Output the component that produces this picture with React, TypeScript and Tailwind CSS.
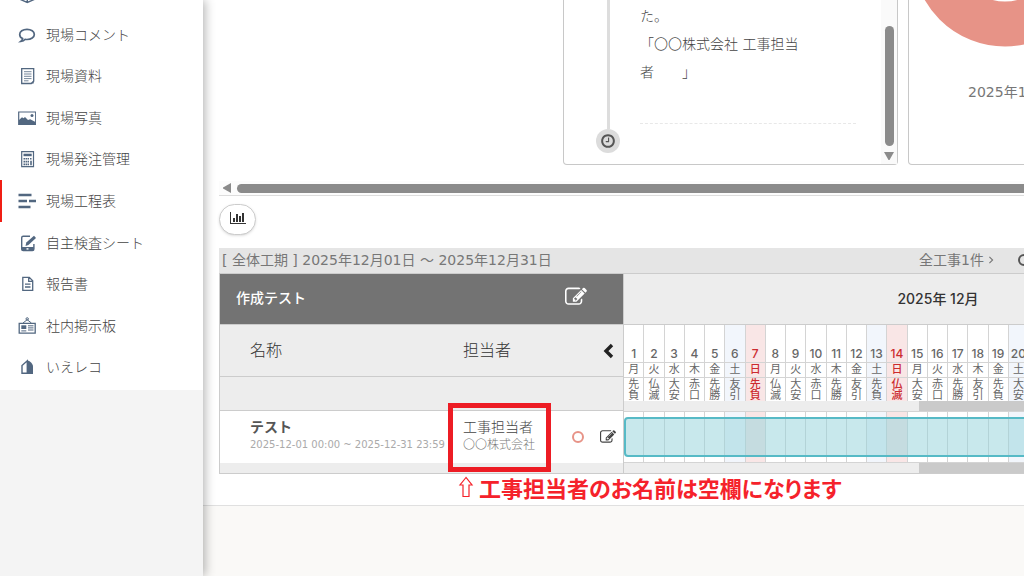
import type { ReactNode } from "react";

const EDIT_PATH =
  "M888 1184l116-116-152-152-116 116v56h96v96h56zm440-720q-16-16-33 1l-350 350q-17 17-1 33t33-1l350-350q17-17 1-33zm80 594v190q0 119-84.5 203.5t-203.5 84.5h-832q-119 0-203.5-84.5t-84.5-203.5v-832q0-119 84.5-203.5t203.5-84.5h832q63 0 117 25 15 7 18 23 3 17-9 29l-49 49q-14 14-32 8-23-6-45-6h-832q-66 0-113 47t-47 113v832q0 66 47 113t113 47h832q66 0 113-47t47-113v-126q0-13 9-22l64-64q15-15 35-7t20 29zm-96-738l288 288-672 672h-288v-288zm444 132l-92 92-288-288 92-92q28-28 68-28t68 28l152 152q28 28 28 68t-28 68z";

const CLOCK_PATH =
  "M1024 544v448q0 14-9 23t-23 9h-320q-14 0-23-9t-9-23v-64q0-14 9-23t23-9h224v-352q0-14 9-23t23-9h64q14 0 23 9t9 23zm416 352q0-148-73-273t-198-198-273-73-273 73-198 198-73 273 73 273 198 198 273 73 273-73 198-198 73-273zm224 0q0 209-103 385.5t-279.5 279.5-385.5 103-385.5-103-279.5-279.5-103-385.5 103-385.5 279.5-279.5 385.5-103 385.5 103 279.5 279.5 103 385.5z";

const CHART_PATH =
  "M640 896v512h-256v-512h256zm384-512v1024h-256v-1024h256zm1024 1152v128h-2048v-1536h128v1408h1920zm-640-896v768h-256v-768h256zm384-384v1152h-256v-1152h256z";

function EditIcon({ className }: { className: string }) {
  return (
    <svg viewBox="0 0 1792 1792" fill="currentColor" className={className} aria-hidden="true">
      <path d={EDIT_PATH} />
    </svg>
  );
}

// Sidebar icons share an 18x18 box
function Icon({ children }: { children: ReactNode }) {
  return (
    <svg
      viewBox="0 0 18 18"
      className="size-[18px] shrink-0 text-[#526780]"
      fill="none"
      stroke="currentColor"
      strokeWidth="1.4"
      aria-hidden="true"
    >
      {children}
    </svg>
  );
}

interface MenuItem {
  label: string;
  active?: boolean;
  icon: ReactNode;
}

const MENU: MenuItem[] = [
  {
    label: "現場コメント",
    icon: (
      <path
        d="M9 3.300C4.800 3.300 1.700 5.500 1.700 8.400c0 1.800 1.100 3.300 2.900 4.200-.2 1.100-.8 2-1.800 2.800 2-.2 3.400-.9 4.400-2.100.6.1 1.200.2 1.800.2 4.200 0 7.300-2.200 7.300-5.100S13.200 3.300 9 3.300z"
        strokeWidth="1.700"
      />
    ),
  },
  {
    label: "現場資料",
    icon: (
      <>
        <path d="M3.700 1.700h12v12.500l-2.400 2.300H3.700z" strokeWidth="1.300" />
        <path d="M6 4.700h7.500M6 7h7.500M6 9.300h7.500M6 11.600h7.500M6 13.800h4.500" strokeWidth=".8" />
        <path d="M15.700 13.500v3h-3z" fill="currentColor" stroke="none" />
      </>
    ),
  },
  {
    label: "現場写真",
    icon: (
      <>
        <path d="M.7 3h17v12.300H.7z" strokeWidth="1.200" />
        <path d="M1 15V11l3-2.800 1.500 1L7 8l3 3 2.200-.8L17.500 13v2z" fill="currentColor" stroke="none" />
        <circle cx="14" cy="6.500" r="1.500" fill="currentColor" stroke="none" />
      </>
    ),
  },
  {
    label: "現場発注管理",
    icon: (
      <>
        <path d="M3.700 1.600h11.800v15H3.700z" strokeWidth="1.200" />
        <path d="M5.500 3.700h8.200v2.500H5.500z" fill="currentColor" stroke="none" />
        <path d="M5.500 8.700h5.500M5.500 11.600h5.500M5.500 14.400h5.500M12 8.700h2" strokeWidth="1.600" strokeDasharray="1.500 .5" />
        <path d="M13 10.800v4.400" strokeWidth="1.600" />
      </>
    ),
  },
  {
    label: "現場工程表",
    active: true,
    icon: <path d="M.5 3h13M.5 9h8.500M11 9h7M.5 15h12" strokeWidth="2.400" />,
  },
  {
    label: "自主検査シート",
    icon: (
      <>
        <path d="M12 2.200H5.200Q3.700 2.200 3.700 3.700v11.400q0 1.500 1.500 1.500h9.200q1.500 0 1.500-1.500V10" />
        <path d="M3.700 13h12.200v3.200H3.700z" fill="currentColor" stroke="none" />
        <path d="M8.500 14.900h2" stroke="#fff" />
        <path d="M7.500 12l.8-3.500 7.700-6.800 2 2.200-7.600 7.200z" fill="currentColor" stroke="none" />
      </>
    ),
  },
  {
    label: "報告書",
    icon: (
      <>
        <path d="M4.800 2.300h6.500l3.400 3.400v9.600H4.800zM10.700 2.500v3.800h3.800" strokeWidth="1.300" />
        <path d="M7 9.200h5.500M7 12h5.500" strokeWidth="1.300" />
      </>
    ),
  },
  {
    label: "社内掲示板",
    icon: (
      <>
        <path d="M1.200 6.300h16v9.900h-16z" strokeWidth="1.300" />
        <path d="M5 6l4.200-3.300L13.400 6" strokeWidth="1" />
        <circle cx="9.200" cy="1.900" r="1.200" strokeWidth="1" />
        <path d="M3.300 8.300h5v3.700h-5z" fill="currentColor" stroke="none" />
        <path d="M10 8.800h5.500M10 10.900h5.500M10 13h5.500M3.300 13.900h5" strokeWidth="1" />
      </>
    ),
  },
  {
    label: "いえレコ",
    icon: (
      <>
        <path d="M4 15.200V7.500L9.300 2.800V15.200z" />
        <path d="M9.300 2.200C12.500 3.200 15 6 15 8.500v7.400H9.300z" fill="currentColor" stroke="none" />
      </>
    ),
  },
];

const WEEKDAYS = ["月", "火", "水", "木", "金", "土", "日"];
// The cycle restarts on the 20th with the new lunar month
const ROKUYO = ["先負", "仏滅", "大安", "赤口", "先勝", "友引"];

const DAYS = Array.from({ length: 31 }, (_, i) => ({
  day: i + 1,
  weekday: WEEKDAYS[i % 7],
  rokuyo: i < 19 ? ROKUYO[i % 6] : ROKUYO[(i - 17) % 6],
}));

function dayColor(weekday: string) {
  if (weekday === "日") return "bg-[#f9e6e6] text-[#cc2b2f] font-medium";
  if (weekday === "土") return "bg-[#f2f6fc] text-[#666] font-normal";
  return "bg-white text-[#666] font-normal";
}

function Sidebar() {
  return (
    <aside className="relative z-10 w-[203px] shrink-0 bg-[#f4f4f4] shadow-[2px_0_10px_rgba(0,0,0,0.3)]">
      <nav className="bg-white pb-0.5">
        <div className="h-3.5 overflow-hidden pl-[18px]">
          <svg viewBox="0 14 18 4" className="h-1 w-[18px] text-[#526780]" fill="none" stroke="currentColor" strokeWidth="1.4">
            <path d="M2.500 4v9.500l6.800 3 6.800-3V4M9.300 9v7.500" />
          </svg>
        </div>
        <ul className="grid h-[374px] grid-rows-9">
          {MENU.map((item) => (
            <li key={item.label} className="flex">
              <a
                href="#"
                className={`flex flex-1 items-center gap-2.5 border-l-2 pl-4 text-sm ${
                  item.active ? "border-[#f01e14]" : "border-transparent"
                }`}
              >
                <Icon>{item.icon}</Icon>
                <span>{item.label}</span>
              </a>
            </li>
          ))}
        </ul>
      </nav>
    </aside>
  );
}

function Cards() {
  return (
    <div className="flex h-[165px] gap-2.5 pl-[344px]">
      <section className="flex w-[335px] shrink-0 rounded-b border border-t-0 border-[#c8c8c8]">
        <div className="ml-8 flex w-6 flex-col items-center">
          <div className="h-[129px] w-[3px] bg-[#ddd]" />
          <div className="flex size-6 items-center justify-center rounded-full bg-[#dcdcdc]">
            <svg viewBox="0 0 1792 1792" className="size-4 text-[#555]" fill="currentColor" aria-hidden="true">
              <path d={CLOCK_PATH} />
            </svg>
          </div>
        </div>
        <div className="ml-5 h-[124px] w-[216px] border-b border-dashed border-[#e8e8e8] pt-0.5 text-sm leading-7">
          <p>た。</p>
          <p>
            「〇〇株式会社 工事担当
            <br />
            者　　」
          </p>
        </div>
        <div className="ml-auto flex w-4 flex-col items-center bg-[#fafafa] pt-[26px]">
          <div className="h-[120px] w-[9px] rounded-full bg-[#8b8b8b]" />
          <svg viewBox="0 0 10 8" className="mt-1.5 h-2 w-2.5 text-[#8b8b8b]" fill="currentColor">
            <path d="M0 0h10L5.500 8h-1z" />
          </svg>
        </div>
      </section>
      <section className="flex w-[195px] shrink-0 flex-col rounded-b border border-t-0 border-[#c8c8c8]">
        <svg viewBox="0 139 186 47" className="ml-[3px] h-[47px] w-[186px]" aria-hidden="true">
          <circle cx="93" cy="93" r="70" fill="none" stroke="#e79387" strokeWidth="45" />
        </svg>
        <p className="mt-[35px] pl-[59px] text-sm font-normal text-[#777]">2025年12月</p>
      </section>
    </div>
  );
}

function TaskTable() {
  return (
    <table className="w-[404px] shrink-0 table-fixed border-separate border-spacing-0 border-l border-[#ccc] text-left">
      <colgroup>
        <col className="w-[230px]" />
        <col className="w-[111px]" />
        <col />
      </colgroup>
      <thead>
        <tr className="h-[50px] bg-[#737373] text-white">
          <th colSpan={2} className="pb-0.5 pl-4 text-sm font-medium">
            作成テスト
          </th>
          <th className="pb-1">
            <button className="ml-1 block" aria-label="工程表を編集">
              <EditIcon className="size-[22px]" />
            </button>
          </th>
        </tr>
        <tr className="h-[53px] bg-[#ededed] text-base text-[#333]">
          <th className="border-y border-[#ccc] pl-[30px] font-light">名称</th>
          <th className="border-y border-[#ccc] pl-[13px] font-light">担当者</th>
          <th className="border-y border-[#ccc] pr-2">
            <button className="ml-auto block" aria-label="閉じる">
              <svg viewBox="0 0 14 16" className="h-4 w-3.5 text-[#222]" fill="none" stroke="currentColor" strokeWidth="3.400">
                <path d="M11 2L5 8l6 6" />
              </svg>
            </button>
          </th>
        </tr>
        <tr className="h-[34px] bg-[#ededed]">
          <td colSpan={3} className="border-b border-[#ccc]" />
        </tr>
      </thead>
      <tbody>
        <tr className="h-[51px] bg-white">
          <td className="pb-1 pl-[30px] whitespace-nowrap">
            <div className="text-sm leading-5 font-bold text-[#555]">テスト</div>
            <div className="text-[10px] leading-4 font-normal text-[#aaa]">2025-12-01 00:00 ~ 2025-12-31 23:59</div>
          </td>
          <td className="pb-1 pl-[13px]">
            <div className="text-sm leading-5">工事担当者</div>
            <div className="text-xs leading-4 text-[#777]">〇〇株式会社</div>
          </td>
          <td className="pr-[7px]">
            <div className="flex items-center justify-between pl-[11px]">
              <span className="size-3 rounded-full border-2 border-[#e79387]" />
              <button aria-label="工事を編集">
                <EditIcon className="size-4 text-[#444]" />
              </button>
            </div>
          </td>
        </tr>
        <tr className="h-[11px] bg-[#ededed]">
          <td colSpan={3} className="border-b border-[#ccc]" />
        </tr>
      </tbody>
    </table>
  );
}

function Scrollbar() {
  return (
    <div className="h-2.5 bg-[#ededed] pl-[295px]">
      <div className="h-full bg-[#cacaca]" />
    </div>
  );
}

function Calendar() {
  return (
    <div className="min-w-0 flex-1 overflow-hidden border-b border-l border-[#ccc]">
      <table className="w-[628px] table-fixed border-separate border-spacing-0 text-center">
        <thead>
          <tr className="h-[51px] bg-[#ededed]">
            <th colSpan={31} className="border-b border-[#ccc] font-[Inter,'Noto_Sans_CJK_JP',sans-serif] text-sm font-medium text-[#333]">
              2025年 12月
            </th>
          </tr>
          <tr className="h-[38px]">
            {DAYS.map((d) => (
              <th
                key={d.day}
                className={`border-r border-b border-[#d4d4d4] align-bottom font-[Inter,sans-serif] text-xs ${dayColor(d.weekday)}`}
              >
                <span className="font-medium">{d.day}</span>
              </th>
            ))}
          </tr>
          <tr className="h-[15px]">
            {DAYS.map((d) => (
              <td key={d.day} className={`border-r border-b border-[#d4d4d4] text-[11px] leading-[14px] ${dayColor(d.weekday)}`}>
                {d.weekday}
              </td>
            ))}
          </tr>
          <tr className="h-[23px]">
            {DAYS.map((d) => (
              <td key={d.day} className={`border-r border-[#d4d4d4] text-[11px] leading-[11px] ${dayColor(d.weekday)}`}>
                <span className="mx-auto block w-[11px] break-all">{d.rokuyo}</span>
              </td>
            ))}
          </tr>
        </thead>
      </table>
      <Scrollbar />
      <div className="relative w-[628px]">
        <table className="w-full table-fixed border-separate border-spacing-0">
          <tbody>
            <tr className="h-[52px]">
              {DAYS.map((d) => (
                <td key={d.day} className={`border-y border-r border-[#d4d4d4] ${dayColor(d.weekday)}`} />
              ))}
            </tr>
          </tbody>
        </table>
        <div className="absolute inset-x-0 top-1.5 bottom-1.5 rounded-sm border-2 border-[#56bac6] bg-[#91d1d9]/50" />
      </div>
      <Scrollbar />
    </div>
  );
}

export default function App() {
  return (
    <div className="flex min-h-screen overflow-hidden bg-[#faf9f7] font-['DejaVu_Sans','Noto_Sans_CJK_JP',sans-serif] font-light text-[#444]">
      <Sidebar />
      <main className="min-w-0 flex-1 overflow-hidden">
        <div className="border-b border-[#e0e0e0] bg-white pl-4">
          <Cards />
          <div className="mt-4 flex h-[15px] items-center border-b border-[#ddd] bg-[#fcfcfc] pl-1">
            <svg viewBox="0 0 8 10" className="mr-1.5 h-2.5 w-2 shrink-0 text-[#8b8b8b]" fill="currentColor">
              <path d="M8 0v10L0 5.500v-1z" />
            </svg>
            <div className="h-[9px] flex-1 rounded-l-full bg-[#8b8b8b]" />
          </div>
          <button
            className="mt-2 flex h-[31px] w-[37px] items-center justify-center rounded-full border border-[#ccc] bg-white shadow-sm"
            aria-label="グラフ表示"
          >
            <svg viewBox="0 0 2048 1792" className="mb-1 h-3.5 w-4 text-[#333]" fill="currentColor" aria-hidden="true">
              <path d={CHART_PATH} />
            </svg>
          </button>
          <div className="mt-[13px] flex h-[26px] items-center overflow-hidden border-b border-[#ccc] bg-[#e5e5e5] pb-0.5 pl-[3px] text-sm font-normal text-[#777]">
            <p className="whitespace-nowrap">[ 全体工期 ] 2025年12月01日 〜 2025年12月31日</p>
            <button className="ml-auto flex items-center gap-1 whitespace-nowrap">
              全工事1件
              <svg viewBox="0 0 6 10" className="h-2 w-1.5" fill="none" stroke="currentColor" strokeWidth="1.400">
                <path d="M1 1l4 4-4 4" />
              </svg>
            </button>
            <button className="ml-6 w-1.5 overflow-hidden" aria-label="更新">
              <span className="block size-3 rounded-full border-2 border-[#555]" />
            </button>
          </div>
          <div className="relative flex">
            <TaskTable />
            <Calendar />
            <div className="absolute top-[129px] left-[229px] h-[69px] w-[103px] border-5 border-[#ed1c24]" />
          </div>
          <p className="flex h-[31px] items-center gap-1 pb-1.5 pl-[238px] font-['Noto_Sans_CJK_JP',sans-serif] text-[22px] leading-6 font-bold whitespace-nowrap text-[#f5222b]">
            <svg viewBox="0 0 16 22" className="h-[22px] w-[18px]" fill="none" stroke="currentColor" strokeWidth="1.200" aria-hidden="true">
              <path d="M8 1.500L2 9h3v11.500h6V9h3z" />
            </svg>
            <span className="[font-feature-settings:'palt']">工事担当者のお名前は空欄になります</span>
          </p>
        </div>
      </main>
    </div>
  );
}
